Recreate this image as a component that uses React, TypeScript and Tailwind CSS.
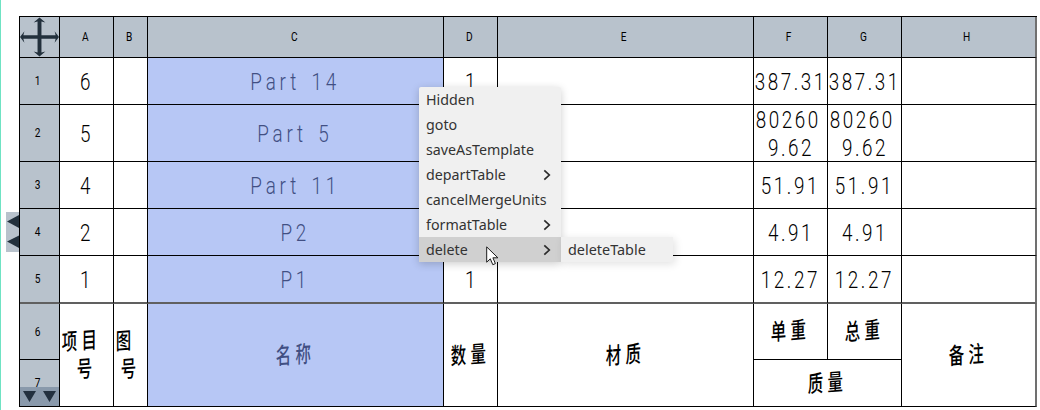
import React from "react";
import clsx from "clsx";

type Line = { text: string; shift?: string };

type CellProps = {
  lines: Line[];
  className?: string;
  cjk?: boolean;
  selected?: boolean;
};

const Cell = ({ lines, className, cjk, selected }: CellProps) => (
  <div
    className={clsx(
      "flex flex-col items-center justify-center border-r border-b border-black min-w-0",
      selected ? "bg-[#b7c7f5] text-[#414f83]" : "text-black",
      cjk ? "pr-px pb-[5px]" : "pt-px",
      className
    )}
  >
    {lines.map((line, i) => (
      <div key={i} className={clsx("flex h-7 items-center justify-center", line.shift)}>
        <span
          className={clsx(
            "block whitespace-pre",
            cjk
              ? "font-['Noto_Sans_CJK_SC',sans-serif] text-[23px] leading-7 font-medium tracking-[6.5px] scale-x-[0.67] -skew-y-3"
              : "font-[Roboto,sans-serif] text-[24.5px] leading-7 font-light scale-x-[0.77]",
            !cjk && (selected ? "tracking-[4.9px] [word-spacing:4px]" : "tracking-[3.3px]")
          )}
        >
          {line.text}
        </span>
      </div>
    ))}
  </div>
);

const Head = ({ text, className }: { text: string; className?: string }) => (
  <div
    className={clsx(
      "flex items-center justify-center border-r border-b border-black bg-[#b8c2cc] pr-[3px] font-[Roboto,sans-serif] text-[13px] text-black",
      className
    )}
  >
    <span className="block scale-x-[0.78]">{text}</span>
  </div>
);

const MoveIcon = () => (
  <svg viewBox="0 0 40 40" className="h-10 w-10" fill="#22303c">
    <path d="M18 3h4v34h-4zM3 18.2h34v3.6H3z" />
    <path d="M20 0l6 5.2-4-1.2h-4l-4 1.2zM20 40l6-5.2-4 1.2h-4l-4-1.2zM0 20l4.5-6-1 4v4l1 4zM40 20l-4.5-6 1 4v4l-1 4z" />
  </svg>
);

const columns = ["A", "B", "C", "D", "E", "F", "G"];

const rows = [
  { no: "1", item: "6", name: "Part 14", count: "1", weight: ["387.31"] },
  { no: "2", item: "5", name: "Part 5", count: "", weight: ["80260", "9.62"] },
  { no: "3", item: "4", name: "Part 11", count: "", weight: ["51.91"] },
  { no: "4", item: "2", name: "P2", count: "", weight: ["4.91"] },
  { no: "5", item: "1", name: "P1", count: "1", weight: ["12.27"] },
];

const menu = [
  { label: "Hidden" },
  { label: "goto" },
  { label: "saveAsTemplate" },
  { label: "departTable", sub: true },
  { label: "cancelMergeUnits" },
  { label: "formatTable", sub: true },
  { label: "delete", sub: true, active: true },
];

const ContextMenu = () => (
  <div className="absolute top-[87px] left-[418px] flex items-end font-['Noto_Sans',sans-serif] text-[15px] text-[#333]">
    <div className="w-[142px] rounded-t-[2px] bg-[#f0f0f0] shadow-[0_2px_8px_rgba(0,0,0,0.2)]">
      {menu.map((item) => (
        <div
          key={item.label}
          className={clsx(
            "flex h-[25px] items-center justify-between pr-[10px] pl-[7px]",
            item.active && "bg-[#d0d0d0]"
          )}
        >
          <span className="block w-0 origin-left scale-x-[0.95] whitespace-nowrap">
            {item.label}
          </span>
          {item.sub && (
            <svg viewBox="0 0 8 12" className="h-3 w-2" fill="none" stroke="#2b2b2b" strokeWidth="1.7">
              <path d="M1.3 1.3L6.3 6l-5 4.7" />
            </svg>
          )}
        </div>
      ))}
    </div>
    <div className="flex h-[25px] w-28 items-center bg-[#f0f0f0] pl-[7px] shadow-[2px_2px_8px_rgba(0,0,0,0.12)]">
      <span className="block origin-left scale-x-[0.96]">deleteTable</span>
    </div>
    <svg viewBox="0 0 13 20" className="absolute top-[159px] left-[67px] h-5 w-[13px]">
      <path
        d="M.7.9v15.3l3.6-3.4 2.5 5.9 2.6-1.1-2.5-5.8h5z"
        fill="#fff"
        stroke="#1c1c1c"
        strokeWidth="1"
      />
    </svg>
  </div>
);

const App = () => {
  return (
    <div className="relative h-[410px] w-[1040px] overflow-hidden border-l border-[#6fe3c3] bg-white pt-4 pl-[18px]">
      <div className="grid w-[1018px] grid-cols-[40px_54px_34px_296px_54px_256px_74px_74px_135px] grid-rows-[41px_47px_57px_47px_47px_48px_56px_47px] border-t border-l border-black">
        <div className="flex items-start border-r border-b border-black bg-[#b8c2cc]">
          <MoveIcon />
        </div>
        {columns.map((c) => (
          <Head key={c} text={c} />
        ))}
        <Head text="H" className="border-r-2 border-r-[#707070]" />

        {rows.map((row) => {
          const last = row.no === "5" && "border-b-2 border-b-[#606060]";
          const weight = row.weight.map((text, i) => ({
            text,
            shift: row.weight.length > 1 && i === 0 ? "pr-[5px]" : "",
          }));
          return (
            <React.Fragment key={row.no}>
              <Head text={row.no} className={clsx(last)} />
              <Cell lines={[{ text: row.item, shift: "pr-px" }]} className={clsx(last)} />
              <Cell lines={[]} className={clsx(last)} />
              <Cell lines={[{ text: row.name, shift: "pr-px" }]} selected className={clsx(last)} />
              <Cell lines={[{ text: row.count, shift: "pl-px" }]} className={clsx(last)} />
              <Cell lines={[]} className={clsx(last)} />
              <Cell lines={weight} className={clsx(last)} />
              <Cell lines={weight} className={clsx(last)} />
              <Cell lines={[]} className={clsx("border-r-2 border-r-[#707070]", last)} />
            </React.Fragment>
          );
        })}

        <Head text="6" />
        <Cell cjk className="row-span-2" lines={[{ text: "项目", shift: "pr-[9px]" }, { text: "号", shift: "pl-[2px]" }]} />
        <Cell cjk className="row-span-2" lines={[{ text: "图", shift: "pr-[8px]" }, { text: "号", shift: "pl-[2px]" }]} />
        <Cell cjk selected className="row-span-2" lines={[{ text: "名称" }]} />
        <Cell cjk className="row-span-2" lines={[{ text: "数量" }]} />
        <Cell cjk className="row-span-2" lines={[{ text: "材质" }]} />
        <Cell cjk lines={[{ text: "单重" }]} />
        <Cell cjk lines={[{ text: "总重" }]} />
        <Cell cjk className="row-span-2 border-r-2 border-r-[#707070]" lines={[{ text: "备注" }]} />
        <div className="relative grid">
          <Head text="7" />
          <svg viewBox="0 0 39 19" className="absolute bottom-px left-0 h-[19px] w-[39px] bg-[#8495a7]/90">
            <path d="M3 4h13L9.5 15zM23 4h13l-6.5 11z" fill="#22303f" />
          </svg>
        </div>
        <Cell cjk className="col-span-2" lines={[{ text: "质量" }]} />
      </div>

      {/* row scroll handle */}
      <svg viewBox="0 0 13 40" className="absolute top-[212px] left-[5px] h-10 w-[13px] bg-[#b8c2cc]">
        <path d="M1 9.5L13 3v13zM1 29.5L13 23.5v12.5z" fill="#22303c" />
      </svg>

      <ContextMenu />
    </div>
  );
};

export default App;
